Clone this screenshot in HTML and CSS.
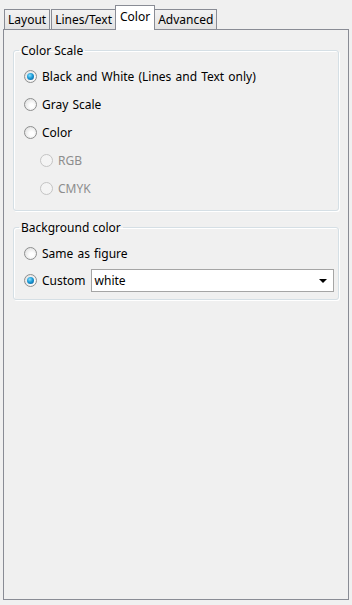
FILE: index.html
```html
<!DOCTYPE html>
<html lang="en">
<head>
    <meta charset="UTF-8">
    <title>Export Setup - Color</title>
    <link rel="stylesheet" href="styles.css">
</head>
<body>

    <div class="tabs">
        <div class="tab">Layout</div>
        <div class="tab">Lines/Text</div>
        <div class="tab tab-active">Color</div>
        <div class="tab">Advanced</div>
    </div>

    <div class="panel">

        <fieldset class="group">
            <legend>Color Scale</legend>
            <div class="option"><span class="radio checked"></span>Black and White (Lines and Text only)</div>
            <div class="option"><span class="radio"></span>Gray Scale</div>
            <div class="option"><span class="radio"></span>Color</div>
            <div class="option sub disabled"><span class="radio"></span>RGB</div>
            <div class="option sub disabled"><span class="radio"></span>CMYK</div>
        </fieldset>

        <fieldset class="group group-bg">
            <legend>Background color</legend>
            <div class="option"><span class="radio"></span>Same as figure</div>
            <div class="option"><span class="radio checked"></span>Custom
                <div class="combo">
                    <span>white</span>
                    <span class="arrow"></span>
                </div>
            </div>
        </fieldset>

    </div>

</body>
</html>
```

FILE: styles.css
```css
body {
    margin: 0;
    background-color: #f0f0f0;
    font-family: "Noto Sans", "DejaVu Sans", sans-serif;
    font-size: 12px;
    color: #000000;
    height: 605px;
    overflow: hidden;
}

.tabs {
    display: flex;
    align-items: flex-end;
    padding-left: 4px;
    height: 30px;
    box-sizing: border-box;
    position: relative;
    z-index: 1;
}

.tab {
    height: 20px;
    line-height: 19px;
    padding: 0 3px;
    margin-bottom: 1px;
    border: 1px solid #898c95;
    border-bottom: none;
    background: linear-gradient(#f2f2f2, #e3e3e3);
    box-sizing: border-box;
    margin-right: 1px;
}

.tab-active {
    height: 25px;
    line-height: 22px;
    padding: 0 4px;
    background: #ffffff;
    margin: 0 -1px 0 -2px;
}

.panel {
    margin: -1px 3px 0 3px;
    height: 571px;
    border: 1px solid #898c95;
    box-sizing: border-box;
    padding: 13px 9px 0 9px;
    display: flex;
    flex-direction: column;
    gap: 9px;
}

.group {
    margin: 0;
    padding: 4px 0 8px 0;
    border: 1px solid #d5dfe5;
    border-radius: 3px;
    box-shadow: inset 1px 1px #ffffff, 1px 1px #ffffff;
}

.group legend {
    margin-left: 5px;
    padding: 0 2px;
    line-height: 15px;
}

.option {
    display: flex;
    align-items: center;
    height: 28px;
    padding-left: 10px;
    word-spacing: 1px;
}

.group-bg {
    padding: 5px 0 5px 0;
}

.group-bg .option {
    height: 27px;
}

.option.sub {
    padding-left: 26px;
}

.disabled {
    color: #8d8d8d;
}

.radio {
    width: 13px;
    height: 13px;
    border-radius: 50%;
    border: 1px solid #8e8f8f;
    box-sizing: border-box;
    background: radial-gradient(circle at 60% 60%, #ffffff 20%, #dcdcdc 90%);
    margin-right: 5px;
    position: relative;
    flex-shrink: 0;
}

.radio.checked::after {
    content: "";
    position: absolute;
    left: 2px;
    top: 2px;
    width: 7px;
    height: 7px;
    border-radius: 50%;
    background: radial-gradient(circle at 40% 35%, #8ae0ff 0%, #1b9bd6 45%, #0b4f8a 100%);
}

.disabled .radio {
    border-color: #c4c4c4;
    background: #f4f4f4;
}

.combo {
    margin-left: 5px;
    width: 243px;
    height: 23px;
    border: 1px solid #a5a5a5;
    background-color: #ffffff;
    box-sizing: border-box;
    display: flex;
    align-items: center;
    justify-content: space-between;
    padding: 0 6px 0 3px;
    word-spacing: 0;
}

.arrow {
    width: 0;
    height: 0;
    border-left: 4px solid transparent;
    border-right: 4px solid transparent;
    border-top: 4px solid #000000;
}
```
